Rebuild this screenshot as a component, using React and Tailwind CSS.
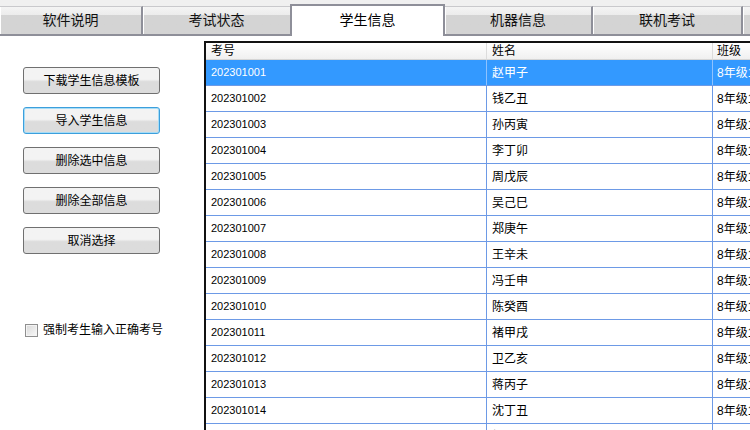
import React from 'react';

const tabs = [
  { name: '软件说明', w: 'w-[143px] border-r-2' },
  { name: '考试状态', w: 'w-[147px]' },
  { name: '学生信息', w: 'w-[155px]', active: true },
  { name: '机器信息', w: 'w-[148px] border-r-2' },
  { name: '联机考试', w: 'w-[150px] border-r-2' },
  { name: '', w: 'flex-1' },
];

const buttons = ['下载学生信息模板', '导入学生信息', '删除选中信息', '删除全部信息', '取消选择'];

const names = [
  '赵甲子', '钱乙丑', '孙丙寅', '李丁卯', '周戊辰', '吴己巳', '郑庚午',
  '王辛未', '冯壬申', '陈癸酉', '褚甲戌', '卫乙亥', '蒋丙子', '沈丁丑', '杨戊寅',
];

const students = names.map((name, i) => ({
  id: `2023010${String(i + 1).padStart(2, '0')}`,
  name,
  cls: '8年级1班',
}));

const Tab = ({ tab }) => {
  if (tab.active) {
    return (
      <div className={`${tab.w} h-[32px] shrink-0 bg-white border-l-2 border-r-2 border-t-2 border-[#8e8f99] flex items-center justify-center text-[14px] text-black pb-[2px]`}>
        {tab.name}
      </div>
    );
  }
  return (
    <div className={`${tab.w} h-[30px] shrink-0 border-b-2 border-[#8e8f99] border-t border-t-[#c9c9cc] bg-gradient-to-b from-[#f4f4f4] via-[#ececec] via-30% to-[#d4d4d4] to-31% flex items-center justify-center text-[14px] text-[#111] shadow-[inset_1px_0_0_#ffffff]`}>
      {tab.name}
    </div>
  );
};

export default function App() {
  return (
    <div className="w-[750px] h-[430px] overflow-hidden bg-white font-['Liberation_Sans','Noto_Sans_CJK_SC',sans-serif] flex flex-col">
      {/* Tab strip */}
      <div className="h-[36px] shrink-0 flex items-end bg-[#f0f0f0]">
        {tabs.map((t, i) => (
          <Tab key={i} tab={t} />
        ))}
      </div>

      <div className="flex flex-1 min-h-0">
        {/* Left panel */}
        <div className="w-[204px] shrink-0 flex flex-col pl-[23px] pt-[31px]">
          <div className="flex flex-col gap-[13px]">
            {buttons.map((b, i) => (
              <button
                key={b}
                className={`w-[137px] h-[27px] rounded-[3px] border text-[12px] text-black bg-gradient-to-b from-[#f3f3f3] from-45% to-[#dcdcdc] to-55% flex items-center justify-center ${
                  i === 1
                    ? 'border-[#3c9fdc] shadow-[inset_0_0_0_1px_#a6dcf6]'
                    : 'border-[#707070]'
                }`}
              >
                {b}
              </button>
            ))}
          </div>
          <label className="flex items-center gap-[5px] mt-[67px] ml-[2px] text-[12px] text-black">
            <span className="w-[13px] h-[13px] border border-[#8f8f8f] bg-gradient-to-br from-[#d8d8d8] to-[#fafafa] shadow-[inset_0_0_0_1px_#f4f4f4]" />
            强制考生输入正确考号
          </label>
        </div>

        {/* Table */}
        <div className="flex-1 mt-[5px] border-l-2 border-t-2 border-[#111] flex flex-col min-w-0">
          <div className="h-[17px] shrink-0 flex bg-gradient-to-b from-white to-[#f0f0f0] border-b border-[#d5d5d5] text-[12px] text-black">
            <div className="w-[281px] shrink-0 pl-[5px] border-r border-[#dcdcdc] flex items-center">考号</div>
            <div className="w-[226px] shrink-0 pl-[5px] border-r border-[#dcdcdc] flex items-center">姓名</div>
            <div className="flex-1 pl-[4px] flex items-center whitespace-nowrap">班级</div>
          </div>
          {students.map((s, i) => {
            const sel = i === 0;
            return (
              <div
                key={s.id}
                className={`h-[26px] shrink-0 flex border-b border-[#6d9ae6] ${sel ? 'bg-[#3399ff] text-white' : 'text-black'}`}
              >
                <div className={`w-[281px] shrink-0 pl-[5px] border-r flex items-center text-[11px] ${sel ? 'border-[#8ec2ff]' : 'border-[#6d9ae6]'}`}>
                  {s.id}
                </div>
                <div className={`w-[226px] shrink-0 pl-[5px] border-r flex items-center text-[12px] ${sel ? 'border-[#8ec2ff]' : 'border-[#6d9ae6]'}`}>
                  {s.name}
                </div>
                <div className="flex-1 pl-[4px] flex items-center text-[12px] whitespace-nowrap overflow-hidden">
                  {s.cls}
                </div>
              </div>
            );
          })}
        </div>
      </div>
    </div>
  );
}
